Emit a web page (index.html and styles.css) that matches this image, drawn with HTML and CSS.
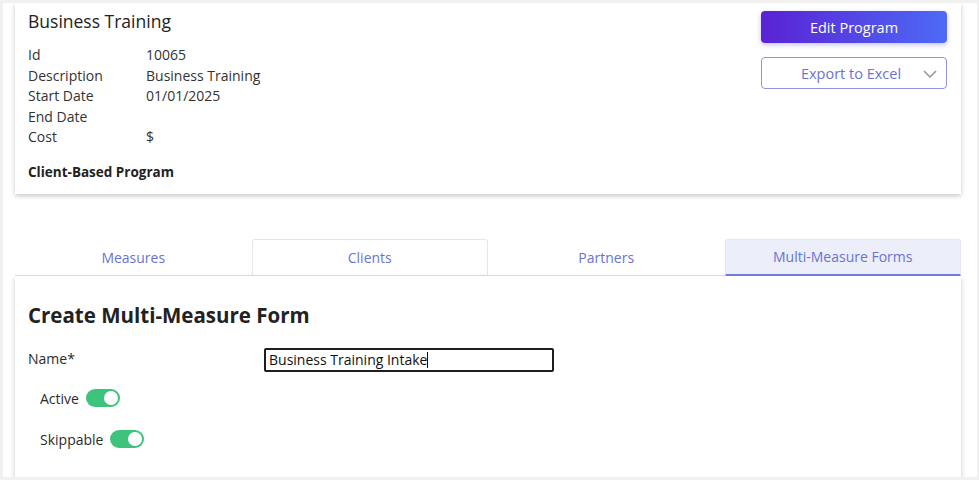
FILE: index.html
```html
<!DOCTYPE html>
<html>
<head>
    <title>Business Training</title>
	<link rel="stylesheet" href="styles.css">
</head>
<body>
	<div class="page">

		<!-- Program summary -->
		<div class="card summary">
			<div class="summary-info">
				<h2 class="summary-title">Business Training</h2>
				<div class="details">
					<span class="details-label">Id</span><span>10065</span>
					<span class="details-label">Description</span><span>Business Training</span>
					<span class="details-label">Start Date</span><span>01/01/2025</span>
					<span class="details-label">End Date</span><span></span>
					<span class="details-label">Cost</span><span>$</span>
				</div>
				<div class="program-type">Client-Based Program</div>
			</div>
			<div class="summary-actions">
				<button class="btn-primary">Edit Program</button>
				<button class="btn-export">
					<span>Export to Excel</span>
					<svg class="chevron" width="14" height="8" viewBox="0 0 14 8">
						<path d="M1 1 L7 7 L13 1" fill="none" stroke="#9a9a9a" stroke-width="1.6"/>
					</svg>
				</button>
			</div>
		</div>

		<!-- Tabs -->
		<div class="tabs">
			<div class="tab">Measures</div>
			<div class="tab tab-hover">Clients</div>
			<div class="tab">Partners</div>
			<div class="tab tab-active">Multi-Measure Forms</div>
		</div>

		<!-- Form -->
		<div class="card form-card">
			<h2 class="form-title">Create Multi-Measure Form</h2>
			<div class="form-row">
				<label class="form-label" for="nameText">Name*</label>
				<div class="text-input" id="nameText">Business Training Intake<span class="caret"></span></div>
			</div>
			<div class="switch-row">
				<span>Active</span>
				<span class="switch"><span class="knob"></span></span>
			</div>
			<div class="switch-row">
				<span>Skippable</span>
				<span class="switch"><span class="knob"></span></span>
			</div>
		</div>

	</div>
</body>
</html>
```

FILE: styles.css
```css
body {
	margin: 0;
	background-color: #f1f1f1;
	font-family: "Open Sans", "Noto Sans", sans-serif;
	color: #2b2b2b;
}

.page {
	margin: 3px 2px 0 3px;
	height: 474px;
	background-color: #fff;
	padding: 0 16px 0 12px;
	overflow: hidden;
}

.card {
	background-color: #fff;
	box-shadow: 0 2px 5px rgba(0, 0, 0, 0.22);
}

.summary {
	display: flex;
	justify-content: space-between;
	height: 191px;
	box-sizing: border-box;
	padding: 6px 14px 0 13px;
}

.summary-title {
	margin: 0;
	font-size: 17.5px;
	font-weight: 500;
	line-height: 24px;
	color: #222;
}

.details {
	display: grid;
	grid-template-columns: 118px auto;
	margin-top: 12px;
	font-size: 14px;
	line-height: 20.5px;
	color: #333;
}

.program-type {
	margin-top: 14px;
	font-size: 13.5px;
	font-weight: 700;
	line-height: 20px;
	color: #222;
}

.summary-actions {
	display: flex;
	flex-direction: column;
	gap: 14px;
	padding-top: 2px;
	width: 186px;
}

.btn-primary {
	height: 32px;
	border: none;
	border-radius: 4px;
	background: linear-gradient(to right, #5a22d4, #4d6af6);
	color: #fff;
	font-family: inherit;
	font-size: 14.5px;
	box-shadow: 0 2px 5px rgba(60, 60, 200, 0.3);
}

.btn-export {
	position: relative;
	height: 32px;
	border: 1px solid #8e93e2;
	border-radius: 4px;
	background-color: #fff;
	color: #6c72d4;
	font-family: inherit;
	font-size: 14.5px;
	padding-left: 0;
}

.chevron {
	position: absolute;
	right: 9px;
	top: 12px;
}

.tabs {
	display: flex;
	margin-top: 45px;
	height: 36px;
	border-bottom: 1px solid #e4e4e4;
}

.tab {
	flex: 1;
	display: flex;
	align-items: center;
	justify-content: center;
	padding-bottom: 1px;
	font-size: 14px;
	color: #6a73d3;
	border: 1px solid transparent;
	border-bottom: none;
	border-radius: 3px 3px 0 0;
}

.tab-hover {
	border-color: #e6e6e6;
}

.tab-active {
	background-color: #eceefa;
	border-color: #e6e7f3;
	border-bottom: 2px solid #6e7ddf;
	margin-bottom: -1px;
}

.form-card {
	height: 210px;
	padding: 25px 13px 0 13px;
}

.form-title {
	margin: 0;
	font-size: 20.5px;
	font-weight: 700;
	line-height: 28px;
	color: #222;
}

.form-row {
	display: flex;
	align-items: center;
	margin-top: 19px;
	font-size: 14px;
}

.form-label {
	width: 236px;
	margin-top: -4px;
}

.text-input {
	width: 290px;
	height: 24px;
	box-sizing: border-box;
	border: 2px solid #1e1e1e;
	border-radius: 2px;
	padding: 0 3px;
	font-size: 14px;
	line-height: 20px;
	color: #111;
}

.caret {
	display: inline-block;
	width: 1px;
	height: 16px;
	background-color: #111;
	vertical-align: -3px;
}

.switch-row {
	display: flex;
	align-items: center;
	gap: 7px;
	margin: 16px 0 0 12px;
	font-size: 14px;
	height: 20px;
}

.switch-row + .switch-row {
	margin-top: 21px;
}

.switch {
	display: flex;
	justify-content: flex-end;
	width: 34px;
	height: 18px;
	border-radius: 9px;
	background-color: #3ec37d;
	padding: 2px;
	box-sizing: border-box;
}

.knob {
	width: 14px;
	height: 14px;
	border-radius: 50%;
	background-color: #fff;
}
```
